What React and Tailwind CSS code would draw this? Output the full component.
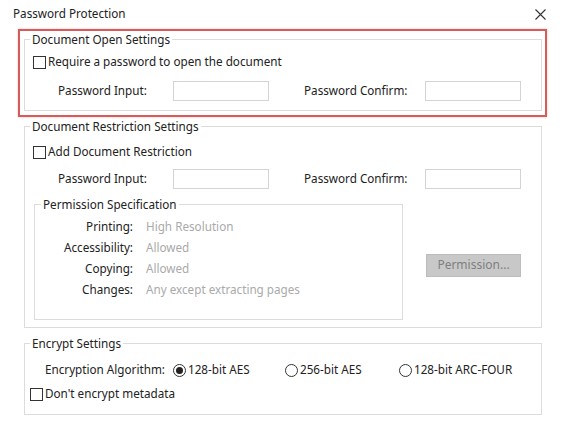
import React from 'react'

const font = { fontFamily: '"Noto Sans", "Open Sans", sans-serif' }

function Checkbox() {
  return <span className="inline-block w-[13px] h-[13px] border border-[#333] bg-white shrink-0" />
}

function Radio({ checked }) {
  return (
    <span className="w-[13px] h-[13px] rounded-full border border-[#333] bg-white flex items-center justify-center shrink-0">
      {checked && <span className="w-[7px] h-[7px] rounded-full bg-[#222]" />}
    </span>
  )
}

function Group({ title, className = '', children }) {
  return (
    <fieldset className={`border border-[#dcdcdc] px-0 ${className}`}>
      <legend className="ml-[5px] px-[2px] leading-[16px] text-[#222]">{title}</legend>
      {children}
    </fieldset>
  )
}

function PasswordRow() {
  return (
    <div className="flex items-center h-[20px] ml-[25px]">
      <span className="w-[115px]">Password Input:</span>
      <span className="w-[96px] h-[20px] border border-[#d4d4d4] bg-white" />
      <span className="ml-[35px] w-[121px]">Password Confirm:</span>
      <span className="w-[96px] h-[20px] border border-[#d4d4d4] bg-white" />
    </div>
  )
}

const permissions = [
  ['Printing:', 'High Resolution'],
  ['Accessibility:', 'Allowed'],
  ['Copying:', 'Allowed'],
  ['Changes:', 'Any except extracting pages'],
]

export default function App() {
  return (
    <div className="w-[570px] h-[425px] bg-white text-[11.7px] text-[#222] overflow-hidden" style={font}>
      {/* title bar */}
      <div className="flex items-center justify-between h-[26px] pl-[13px] pr-[24px] pt-[1px]">
        <span>Password Protection</span>
        <svg width="11" height="11" viewBox="0 0 11 11" className="mt-[2px]">
          <path d="M0.5 0.5 L10.5 10.5 M10.5 0.5 L0.5 10.5" stroke="#333" strokeWidth="1.1" />
        </svg>
      </div>

      {/* highlighted open settings */}
      <div className="ml-[18px] mt-[3px] w-[529px] h-[88px] border-2 border-[#d65c5c] shadow-[0_0_2px_#f2b8b8] pl-[4px] pr-[3px] pb-[4px]">
        <Group title="Document Open Settings" className="h-[80px]">
          <div className="pl-[8px] pt-[5px]">
            <div className="flex items-center gap-[2px] h-[20px]">
              <Checkbox />
              <span>Require a password to open the document</span>
            </div>
            <div className="mt-[9px]">
              <PasswordRow />
            </div>
          </div>
        </Group>
      </div>

      {/* restriction settings */}
      <Group title="Document Restriction Settings" className="ml-[24px] mt-[1px] w-[518px] h-[210px]">
        <div className="pl-[8px] pt-[8px]">
          <div className="flex items-center gap-[2px] h-[20px]">
            <Checkbox />
            <span>Add Document Restriction</span>
          </div>
          <div className="mt-[7px]">
            <PasswordRow />
          </div>
          <div className="flex mt-[7px]">
            <fieldset className="ml-[1px] w-[369px] h-[124px] border border-[#dcdcdc] px-0">
              <legend className="ml-[6px] px-[2px] leading-[16px]">Permission Specification</legend>
              <div className="pt-[4px]">
                {permissions.map(([k, v]) => (
                  <div key={k} className="flex items-center h-[21px]">
                    <span className="w-[98px] text-right">{k}</span>
                    <span className="ml-[13px] text-[#aaa]">{v}</span>
                  </div>
                ))}
              </div>
            </fieldset>
            <div className="flex items-center pl-[23px] pt-[14px]">
              <button className="w-[95px] h-[23px] bg-[#c8c8c8] border border-[#bdbdbd] text-[#808080] text-[12px]">
                Permission...
              </button>
            </div>
          </div>
        </div>
      </Group>

      {/* encrypt settings */}
      <Group title="Encrypt Settings" className="ml-[24px] mt-[7px] w-[518px] h-[80px]">
        <div className="pt-[9px]">
          <div className="flex items-center h-[20px] pl-[20px]">
            <span className="w-[128px]">Encryption Algorithm:</span>
            <Radio checked />
            <span className="ml-[2px] w-[97px]">128-bit AES</span>
            <Radio />
            <span className="ml-[2px] w-[99px]">256-bit AES</span>
            <Radio />
            <span className="ml-[2px]">128-bit ARC-FOUR</span>
          </div>
          <div className="flex items-center gap-[2px] h-[20px] mt-[4px] pl-[5px]">
            <Checkbox />
            <span>Don't encrypt metadata</span>
          </div>
        </div>
      </Group>
    </div>
  )
}
